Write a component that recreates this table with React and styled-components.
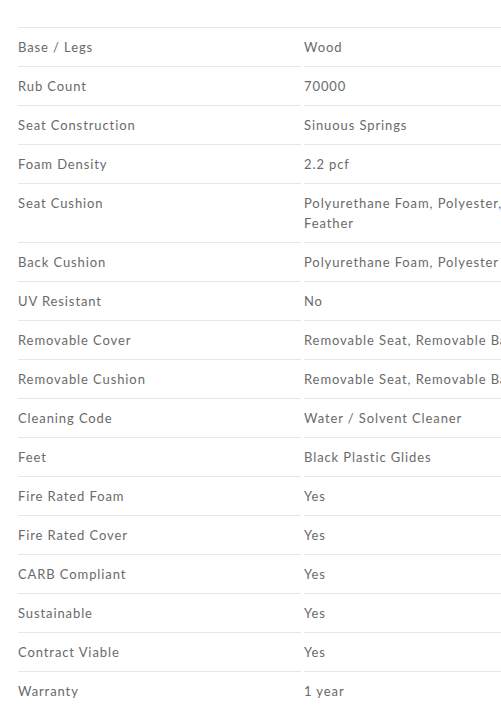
import React from "react";
import styled, { createGlobalStyle } from "styled-components";

const specs = [
  ["Base / Legs", "Wood"],
  ["Rub Count", "70000"],
  ["Seat Construction", "Sinuous Springs"],
  ["Foam Density", "2.2 pcf"],
  ["Seat Cushion", "Polyurethane Foam, Polyester, Feather"],
  ["Back Cushion", "Polyurethane Foam, Polyester"],
  ["UV Resistant", "No"],
  ["Removable Cover", "Removable Seat, Removable Back"],
  ["Removable Cushion", "Removable Seat, Removable Back"],
  ["Cleaning Code", "Water / Solvent Cleaner"],
  ["Feet", "Black Plastic Glides"],
  ["Fire Rated Foam", "Yes"],
  ["Fire Rated Cover", "Yes"],
  ["CARB Compliant", "Yes"],
  ["Sustainable", "Yes"],
  ["Contract Viable", "Yes"],
  ["Warranty", "1 year"],
];

const GlobalStyle = createGlobalStyle`
  html, body {
    margin: 0;
    background: #fff;
    overflow-x: hidden;
  }
  body {
    font-family: Lato, "Open Sans", sans-serif;
  }
`;

const Wrapper = styled.div`
  padding: 27px 0 0 18px;
  width: 580px;
`;

const Table = styled.div`
  display: grid;
  grid-template-columns: 283px 250px;
  column-gap: 3px;
  border-top: 1px solid #e6e6e6;
`;

const Cell = styled.div`
  padding: 9px ${(p) => (p.$value ? "12px" : "0")} 9px 0;
  border-bottom: 1px solid #e6e6e6;
  font-size: 13px;
  line-height: 20px;
  letter-spacing: 0.9px;
  color: #6a6a6a;
`;

const App = () => {
  return (
    <Wrapper>
      <GlobalStyle />
      <Table>
        {specs.map(([label, value]) => (
          <React.Fragment key={label}>
            <Cell>{label}</Cell>
            <Cell $value>{value}</Cell>
          </React.Fragment>
        ))}
      </Table>
    </Wrapper>
  );
};

export default App;
